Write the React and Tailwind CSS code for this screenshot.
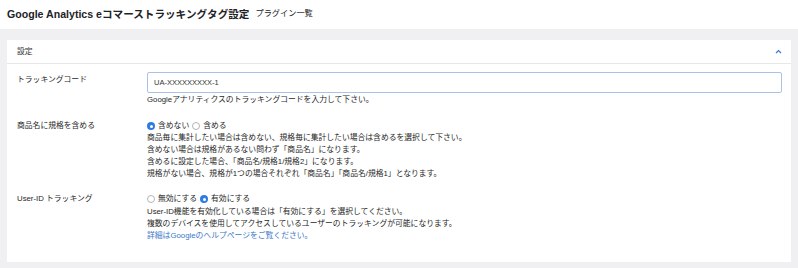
import React from "react";

const font = { fontFamily: '"Liberation Sans", "Noto Sans CJK JP", sans-serif' };

function Radio({ checked }) {
  return checked ? (
    <span className="inline-flex h-[8px] w-[8px] shrink-0 items-center justify-center rounded-full bg-[#2f7ae5]">
      <span className="h-[3px] w-[3px] rounded-full bg-white" />
    </span>
  ) : (
    <span className="inline-block h-[8px] w-[8px] shrink-0 rounded-full border border-[#b5b5b5] bg-white" />
  );
}

function Row({ label, children, className = "" }) {
  return (
    <div className={"flex " + className}>
      <div className="w-[130px] shrink-0 leading-[12px]">{label}</div>
      <div className="flex-1 pr-[9px]">{children}</div>
    </div>
  );
}

export default function App() {
  return (
    <div className="h-[268px] w-[798px] overflow-hidden bg-[#f0f0f3] text-[#1f1f1f]" style={font}>
      <div className="flex h-[29px] items-center gap-[6px] bg-white pl-[7px]">
        <span className="text-[10.6px] font-bold text-[#1d2327]">Google Analytics eコマーストラッキングタグ設定</span>
        <span className="text-[8.2px] text-[#222]">プラグイン一覧</span>
      </div>
      <div className="px-[7px] pr-[7px] pt-[11px]">
        <div className="h-[222px] bg-white text-[7.8px]">
          <div className="flex h-[24px] items-center justify-between border-b border-[#e8e8ea] pl-[10px] pr-[9px]">
            <span className="text-[#333]">設定</span>
            <svg width="7" height="5" viewBox="0 0 7 5" className="text-[#3a7bd5]">
              <path d="M1 4 L3.5 1.5 L6 4" fill="none" stroke="currentColor" strokeWidth="1.2" />
            </svg>
          </div>
          <div className="pl-[10px] pt-[8px]">
            <Row label={<div className="pt-[2px]">トラッキングコード</div>}>
              <div className="flex h-[21px] items-center rounded-[2px] border border-[#a9c3e8] px-[6px] text-[7.5px] text-[#333]">
                UA-XXXXXXXXX-1
              </div>
              <div className="mt-[1px] leading-[12px]">Googleアナリティクスのトラッキングコードを入力して下さい。</div>
            </Row>
            <Row label="商品名に規格を含める" className="mt-[14px]">
              <div className="leading-[12px]">
                <div className="flex h-[12px] items-center gap-[3px]">
                  <Radio checked />
                  <span>含めない</span>
                  <Radio />
                  <span>含める</span>
                </div>
                <div>商品毎に集計したい場合は含めない、規格毎に集計したい場合は含めるを選択して下さい。</div>
                <div>含めない場合は規格があるない問わず「商品名」になります。</div>
                <div>含めるに設定した場合、「商品名/規格1/規格2」になります。</div>
                <div>規格がない場合、規格が1つの場合それぞれ「商品名」「商品名/規格1」となります。</div>
              </div>
            </Row>
            <Row label="User-ID トラッキング" className="mt-[13px]">
              <div className="leading-[12px]">
                <div className="flex h-[12px] items-center gap-[3px]">
                  <Radio />
                  <span>無効にする</span>
                  <Radio checked />
                  <span>有効にする</span>
                </div>
                <div className="mt-[1px]">User-ID機能を有効化している場合は「有効にする」を選択してください。</div>
                <div>複数のデバイスを使用してアクセスしているユーザーのトラッキングが可能になります。</div>
                <div className="text-[#3a78c8]">詳細はGoogleのヘルプページをご覧ください。</div>
              </div>
            </Row>
          </div>
        </div>
      </div>
    </div>
  );
}
